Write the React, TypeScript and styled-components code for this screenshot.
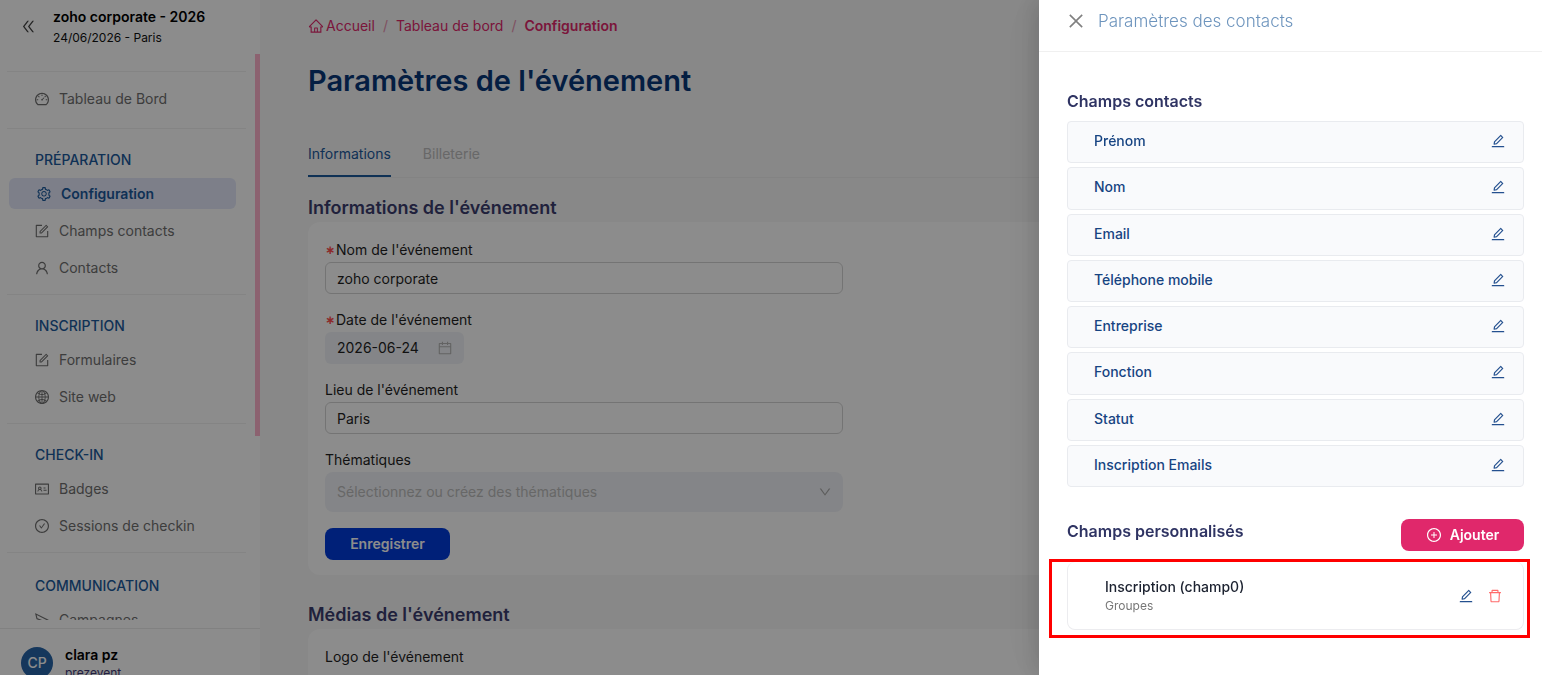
import React from "react";
import styled, { createGlobalStyle } from "styled-components";
import {
  AiOutlineCalendar,
  AiOutlineCheckCircle,
  AiOutlineClose,
  AiOutlineDashboard,
  AiOutlineDelete,
  AiOutlineDoubleLeft,
  AiOutlineDown,
  AiOutlineEdit,
  AiOutlineForm,
  AiOutlineGlobal,
  AiOutlineHome,
  AiOutlineIdcard,
  AiOutlinePlusCircle,
  AiOutlineSend,
  AiOutlineSetting,
  AiOutlineUser,
} from "react-icons/ai";

const GlobalStyle = createGlobalStyle`
  *, *::before, *::after { box-sizing: border-box; }
  body {
    margin: 0;
    overflow: hidden;
    background: #f7f7f8;
    color: #1f1f1f;
    font-family: Inter, "Liberation Sans", sans-serif;
    font-size: 14px;
    line-height: 22px;
  }
  button, input, select { font: inherit; color: inherit; }
  button { cursor: pointer; }
  a { color: inherit; text-decoration: none; }
  h1, h2, h3, p, ul, ol { margin: 0; padding: 0; }
  ul, ol { list-style: none; }
`;

const Shell = styled.div`
  display: flex;
  height: 100vh;
  overflow: hidden;
`;

/* ---------- Sidebar ---------- */

const Sidebar = styled.aside`
  display: flex;
  flex-direction: column;
  flex: none;
  width: 260px;
  background: #fff;
`;

const SidebarHeader = styled.header`
  display: flex;
  flex: none;
  gap: 16px;
  height: 54px;
  padding: 6px 20px 0;
`;

const CollapseButton = styled.button`
  display: flex;
  align-items: center;
  height: 40px;
  padding: 0;
  border: 0;
  background: none;
  color: #444;
  font-size: 17px;
`;

const EventName = styled.p`
  color: #000;
  font-weight: 600;
`;

const EventInfo = styled.p`
  color: #111;
  font-size: 12px;
  line-height: 20px;
`;

const NavArea = styled.div`
  display: flex;
  flex: 1;
  min-height: 0;
  margin-bottom: 8px;
  overflow: hidden;
`;

const Nav = styled.nav`
  flex: 1;
  padding: 0 9px 0 7px;
`;

const ScrollThumb = styled.div`
  width: 5px;
  height: 382px;
  background: #ffb3cc;
`;

const NavSection = styled.section<{ $top: number; $bottom: number }>`
  padding: ${(p) => p.$top}px 10px ${(p) => p.$bottom}px 2px;
  border-bottom: 1px solid #f0f0f0;
`;

const NavRule = styled.div`
  height: 18px;
  border-bottom: 1px solid #f0f0f0;
`;

const NavTitle = styled.h2`
  padding-left: 26px;
  margin-bottom: 6px;
  color: #1c5a9c;
  font-size: 14px;
  font-weight: 500;
  line-height: 24px;
`;

const NavList = styled.ul`
  display: flex;
  flex-direction: column;
  gap: 6px;
`;

const NavLink = styled.a<{ $active?: boolean }>`
  display: flex;
  align-items: center;
  gap: 9px;
  height: 31px;
  padding-left: ${(p) => (p.$active ? 27 : 25)}px;
  border-radius: 6px;
  background: ${(p) => (p.$active ? "#e3e8fa" : "transparent")};
  color: ${(p) => (p.$active ? "#1c5a9c" : "#707070")};
  font-weight: ${(p) => (p.$active ? 600 : 400)};
  white-space: nowrap;

  svg { flex: none; font-size: 16px; }
`;

const UserBar = styled.footer`
  display: flex;
  flex: none;
  gap: 12px;
  height: 47px;
  padding: 16px 21px 0;
  border-top: 1px solid #ececec;
`;

const Avatar = styled.span`
  display: flex;
  flex: none;
  align-items: center;
  justify-content: center;
  width: 32px;
  height: 32px;
  margin-top: 2px;
  border-radius: 50%;
  background: #2765a8;
  color: #fff;
  font-weight: 500;
`;

const UserName = styled.p`
  color: #000;
  font-weight: 600;
  line-height: 20px;
`;

const UserOrg = styled.p`
  color: #3e3a78;
  font-size: 12px;
  line-height: 16px;
`;

/* ---------- Main column ---------- */

const Main = styled.main`
  flex: 1;
  min-width: 0;
  padding: 15px 0 0 48px;
`;

const Breadcrumb = styled.ol`
  display: flex;
  gap: 8px;
  color: #e0286b;
`;

const Crumb = styled.li<{ $current?: boolean }>`
  font-weight: ${(p) => (p.$current ? 600 : 400)};

  a { display: flex; align-items: center; gap: 2px; }
  svg { font-size: 16px; }
`;

const CrumbSlash = styled.li`
  color: #e892b0;
`;

const PageTitle = styled.h1`
  margin-top: 24px;
  color: #083878;
  font-size: 29px;
  font-weight: 600;
  line-height: 40px;
`;

const Tabs = styled.div`
  display: flex;
  gap: 32px;
  margin-top: 31px;
  border-bottom: 1px solid #efefef;
`;

const Tab = styled.button<{ $active?: boolean }>`
  height: 45px;
  padding: 0;
  border: 0;
  border-bottom: 2px solid ${(p) => (p.$active ? "#1c5a9c" : "transparent")};
  background: none;
  color: ${(p) => (p.$active ? "#1c5a9c" : "#bdbdbd")};
`;

const BlockTitle = styled.h2`
  margin-top: 17px;
  color: #3b3d6e;
  font-size: 18px;
  font-weight: 600;
  line-height: 26px;
`;

const Card = styled.section`
  margin: 1px 0 27px;
  padding: 17px 17px 15px;
  border-radius: 12px;
  background: #fff;
`;

const Field = styled.div<{ $gap: number }>`
  display: flex;
  flex-direction: column;
  align-items: flex-start;
  gap: 1px;
  max-width: 518px;
  margin-bottom: ${(p) => p.$gap}px;
`;

const Label = styled.label<{ $required?: boolean }>`
  display: flex;
  align-items: center;
  gap: 4px;
  line-height: 22px;

  &::before {
    display: ${(p) => (p.$required ? "block" : "none")};
    content: "∗";
    color: #ff4d4f;
    font-family: "DejaVu Sans", sans-serif;
    font-size: 12px;
    font-weight: 700;
    width: 7px;
  }
`;

const TextInput = styled.input`
  width: 100%;
  height: 32px;
  padding: 0 11px;
  border: 1px solid #d4d4d4;
  border-radius: 6px;
  background: #fff;
`;

const DateBox = styled.div`
  display: flex;
  align-items: center;
  width: 139px;
  height: 32px;
  padding: 0 11px 0 12px;
  border-radius: 6px;
  background: #f1f3f7;

  input { flex: 1; min-width: 0; padding: 0; border: 0; background: none; }
  svg { flex: none; color: #b5b5b5; font-size: 16px; }
`;

const SelectBox = styled.div`
  display: grid;
  align-items: center;
  width: 100%;

  select, svg { grid-area: 1 / 1; }
  select {
    width: 100%;
    height: 40px;
    padding: 0 12px;
    border: 0;
    border-radius: 8px;
    background: #f1f3f7;
    color: #bcbcbc;
    appearance: none;
  }
  svg { justify-self: end; margin-right: 11px; color: #a8a8a8; font-size: 14px; pointer-events: none; }
`;

const Button = styled.button<{ $tone: string; $width: number }>`
  display: flex;
  align-items: center;
  justify-content: center;
  gap: 8px;
  width: ${(p) => p.$width}px;
  height: 32px;
  padding: 0;
  border: 0;
  border-radius: 8px;
  background: ${(p) => p.$tone};
  color: #fff;
  font-weight: 600;

  svg { font-size: 16px; }
`;

const UploadBox = styled.div`
  width: 152px;
  height: 100px;
  margin-top: 7px;
  border-radius: 8px;
  background: #e4e4e4;
`;

/* ---------- Drawer ---------- */

const Mask = styled.div`
  position: fixed;
  inset: 0;
  background: rgba(0, 0, 0, 0.45);
`;

const Drawer = styled.aside`
  position: fixed;
  top: 0;
  right: 0;
  bottom: 0;
  width: 503px;
  background: #fff;
  box-shadow: -6px 0 16px rgba(0, 0, 0, 0.08), -9px 0 28px rgba(0, 0, 0, 0.05),
    -12px 0 48px rgba(0, 0, 0, 0.03);
`;

const DrawerHeader = styled.header`
  display: flex;
  align-items: center;
  gap: 12px;
  height: 52px;
  padding: 0 27px 10px;
  border-bottom: 1px solid #f0f0f0;
`;

const DrawerTitle = styled.h2`
  color: #6d94bd;
  font-size: 17px;
  font-weight: 300;
  line-height: 28px;
`;

const IconButton = styled.button<{ $color: string; $size: number }>`
  display: flex;
  padding: 0;
  border: 0;
  background: none;
  color: ${(p) => p.$color};
  font-size: ${(p) => p.$size}px;
`;

const DrawerBody = styled.div`
  padding: 37px 18px 0 28px;
`;

const DrawerHeading = styled.h3`
  color: #2f3463;
  font-size: 16px;
  font-weight: 600;
  line-height: 24px;
`;

const FieldList = styled.ul`
  display: grid;
  grid-auto-rows: 1fr;
  gap: 4px;
  height: 366px;
  margin: 8px 0 32px;
`;

const FieldRow = styled.li`
  display: flex;
  align-items: center;
  justify-content: space-between;
  padding: 0 17px 2px 26px;
  border: 1px solid #e9ebef;
  border-radius: 4px;
  background: #f9fafc;
  color: #174482;
  font-weight: 500;
`;

const CustomHeader = styled.div`
  display: flex;
  align-items: flex-start;
  justify-content: space-between;
`;

const Highlight = styled.div`
  margin: 8px -6px 0 -18px;
  padding: 0 3px 5px 15px;
  border: 3px solid #ff0000;
`;

const CustomCard = styled.div`
  display: flex;
  align-items: center;
  justify-content: space-between;
  height: 68px;
  padding: 0 20px 0 37px;
  border: 1px solid #ececef;
  border-top: 0;
  border-radius: 8px;
`;

const CustomName = styled.p`
  color: #1c2230;
  font-weight: 500;
  line-height: 20px;
`;

const CustomType = styled.p`
  color: #777;
  font-size: 12px;
  line-height: 18px;
`;

const Actions = styled.div`
  display: flex;
  gap: 13px;
`;

type Item = { label: string; icon: React.ReactNode; active?: boolean };

const sections: { title: string; top: number; items: Item[] }[] = [
  {
    title: "PRÉPARATION",
    top: 19,
    items: [
      { label: "Configuration", icon: <AiOutlineSetting />, active: true },
      { label: "Champs contacts", icon: <AiOutlineForm /> },
      { label: "Contacts", icon: <AiOutlineUser /> },
    ],
  },
  {
    title: "INSCRIPTION",
    top: 19,
    items: [
      { label: "Formulaires", icon: <AiOutlineForm /> },
      { label: "Site web", icon: <AiOutlineGlobal /> },
    ],
  },
  {
    title: "CHECK-IN",
    top: 19,
    items: [
      { label: "Badges", icon: <AiOutlineIdcard /> },
      { label: "Sessions de checkin", icon: <AiOutlineCheckCircle /> },
    ],
  },
  {
    title: "COMMUNICATION",
    top: 21,
    items: [{ label: "Campagnes", icon: <AiOutlineSend /> }],
  },
];

const contactFields = [
  "Prénom",
  "Nom",
  "Email",
  "Téléphone mobile",
  "Entreprise",
  "Fonction",
  "Statut",
  "Inscription Emails",
];

function NavItems({ items }: { items: Item[] }) {
  return (
    <NavList>
      {items.map((item) => (
        <li key={item.label}>
          <NavLink href="#" $active={item.active}>
            {item.icon}
            {item.label}
          </NavLink>
        </li>
      ))}
    </NavList>
  );
}

export default function App() {
  return (
    <>
      <GlobalStyle />
      <Shell>
        <Sidebar>
          <SidebarHeader>
            <CollapseButton aria-label="Réduire le menu">
              <AiOutlineDoubleLeft />
            </CollapseButton>
            <div>
              <EventName>zoho corporate - 2026</EventName>
              <EventInfo>24/06/2026 - Paris</EventInfo>
            </div>
          </SidebarHeader>
          <NavArea>
            <Nav>
              <NavRule />
              <NavSection $top={11} $bottom={14}>
                <NavItems items={[{ label: "Tableau de Bord", icon: <AiOutlineDashboard /> }]} />
              </NavSection>
              {sections.map((section) => (
                <NavSection key={section.title} $top={section.top} $bottom={11}>
                  <NavTitle>{section.title}</NavTitle>
                  <NavItems items={section.items} />
                </NavSection>
              ))}
            </Nav>
            <ScrollThumb />
          </NavArea>
          <UserBar>
            <Avatar>CP</Avatar>
            <div>
              <UserName>clara pz</UserName>
              <UserOrg>prezevent</UserOrg>
            </div>
          </UserBar>
        </Sidebar>

        <Main>
          <Breadcrumb>
            <Crumb>
              <a href="#">
                <AiOutlineHome />
                Accueil
              </a>
            </Crumb>
            <CrumbSlash>/</CrumbSlash>
            <Crumb>
              <a href="#">Tableau de bord</a>
            </Crumb>
            <CrumbSlash>/</CrumbSlash>
            <Crumb $current>Configuration</Crumb>
          </Breadcrumb>
          <PageTitle>Paramètres de l'événement</PageTitle>
          <Tabs role="tablist">
            <Tab role="tab" aria-selected $active>
              Informations
            </Tab>
            <Tab role="tab">Billeterie</Tab>
          </Tabs>

          <BlockTitle>Informations de l'événement</BlockTitle>
          <Card>
            <Field $gap={15}>
              <Label $required htmlFor="event-name">
                Nom de l'événement
              </Label>
              <TextInput id="event-name" defaultValue="zoho corporate" />
            </Field>
            <Field $gap={15}>
              <Label $required htmlFor="event-date">
                Date de l'événement
              </Label>
              <DateBox>
                <input id="event-date" defaultValue="2026-06-24" />
                <AiOutlineCalendar />
              </DateBox>
            </Field>
            <Field $gap={15}>
              <Label htmlFor="event-place">Lieu de l'événement</Label>
              <TextInput id="event-place" defaultValue="Paris" />
            </Field>
            <Field $gap={16}>
              <Label htmlFor="event-topics">Thématiques</Label>
              <SelectBox>
                <select id="event-topics" defaultValue="">
                  <option value="">Sélectionnez ou créez des thématiques</option>
                </select>
                <AiOutlineDown />
              </SelectBox>
            </Field>
            <Button $tone="#003bdb" $width={125}>
              Enregistrer
            </Button>
          </Card>

          <BlockTitle>Médias de l'événement</BlockTitle>
          <Card>
            <p>Logo de l'événement</p>
            <UploadBox />
          </Card>
        </Main>
      </Shell>

      <Mask />
      <Drawer role="dialog" aria-label="Paramètres des contacts">
        <DrawerHeader>
          <IconButton aria-label="Fermer" $color="#808080" $size={20}>
            <AiOutlineClose />
          </IconButton>
          <DrawerTitle>Paramètres des contacts</DrawerTitle>
        </DrawerHeader>
        <DrawerBody>
          <DrawerHeading>Champs contacts</DrawerHeading>
          <FieldList>
            {contactFields.map((name) => (
              <FieldRow key={name}>
                {name}
                <IconButton aria-label={`Modifier ${name}`} $color="#24508f" $size={16}>
                  <AiOutlineEdit />
                </IconButton>
              </FieldRow>
            ))}
          </FieldList>
          <CustomHeader>
            <DrawerHeading>Champs personnalisés</DrawerHeading>
            <Button $tone="#e0286b" $width={123}>
              <AiOutlinePlusCircle />
              Ajouter
            </Button>
          </CustomHeader>
          <Highlight>
            <CustomCard>
              <div>
                <CustomName>Inscription (champ0)</CustomName>
                <CustomType>Groupes</CustomType>
              </div>
              <Actions>
                <IconButton aria-label="Modifier le champ" $color="#24508f" $size={16}>
                  <AiOutlineEdit />
                </IconButton>
                <IconButton aria-label="Supprimer le champ" $color="#ff6b6b" $size={16}>
                  <AiOutlineDelete />
                </IconButton>
              </Actions>
            </CustomCard>
          </Highlight>
        </DrawerBody>
      </Drawer>
    </>
  );
}
